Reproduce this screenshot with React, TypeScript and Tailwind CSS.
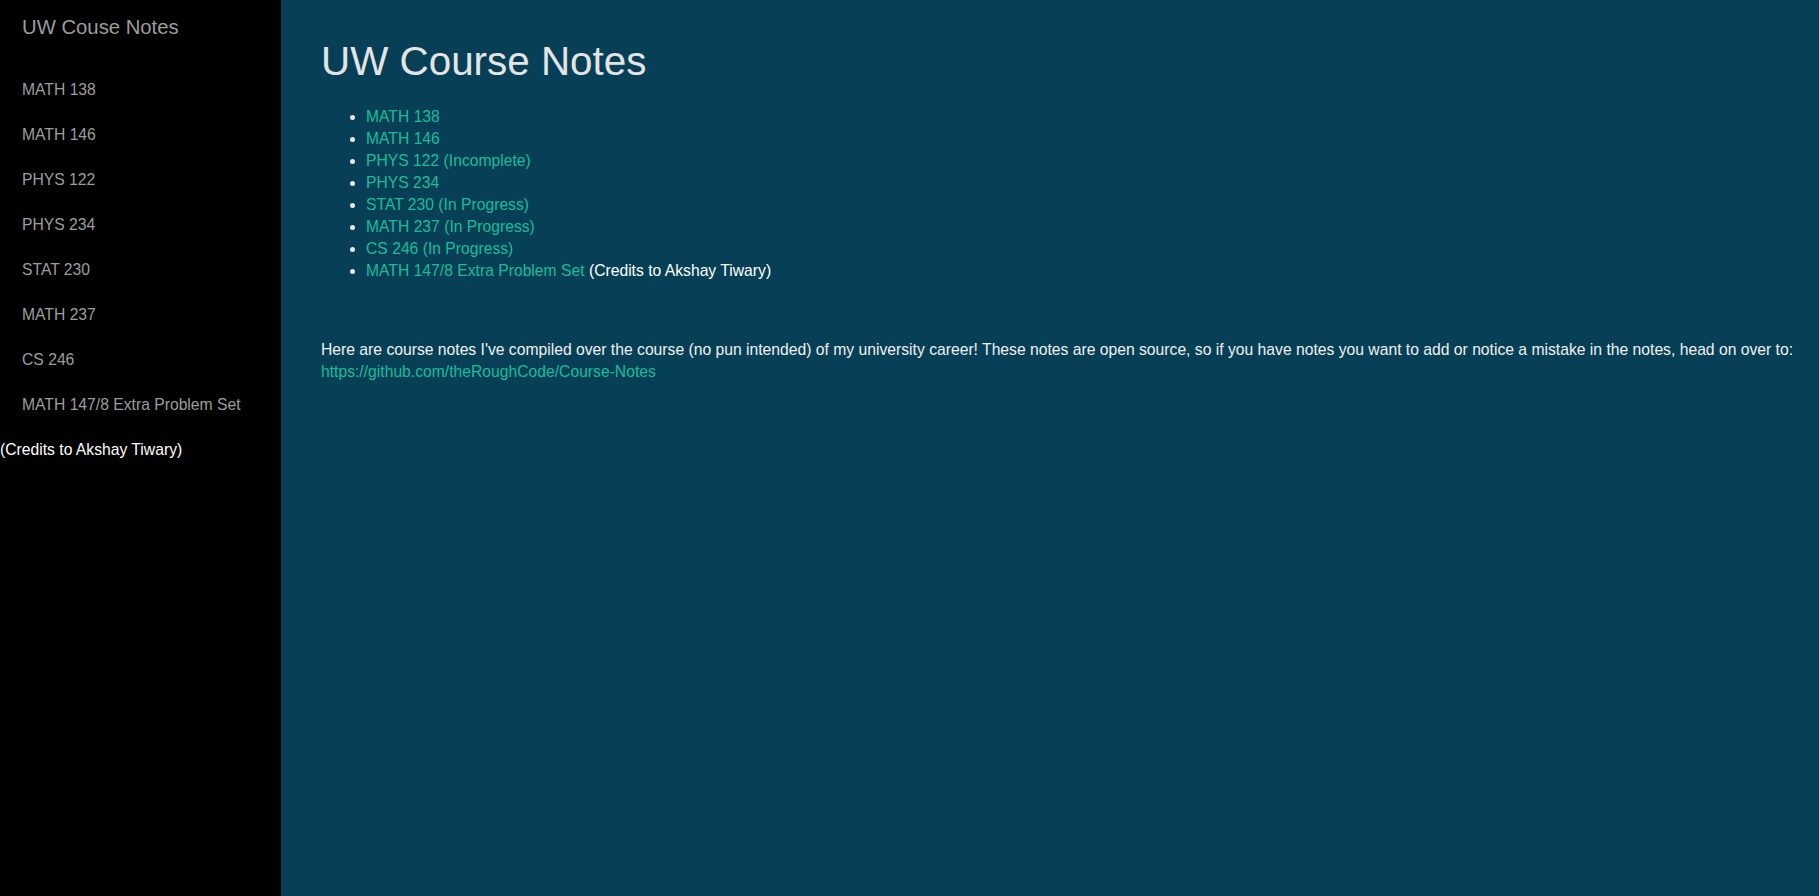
import React from "react";

const courses = ["MATH 138", "MATH 146", "PHYS 122", "PHYS 234", "STAT 230", "MATH 237", "CS 246", "MATH 147/8 Extra Problem Set"];

const mainItems: { label: string; extra?: string }[] = [
  { label: "MATH 138" },
  { label: "MATH 146" },
  { label: "PHYS 122 (Incomplete)" },
  { label: "PHYS 234" },
  { label: "STAT 230 (In Progress)" },
  { label: "MATH 237 (In Progress)" },
  { label: "CS 246 (In Progress)" },
  { label: "MATH 147/8 Extra Problem Set", extra: " (Credits to Akshay Tiwary)" },
];

export default function App() {
  return (
    <div
      className="flex min-h-screen w-full text-[15.7px] leading-[22px]"
      style={{ fontFamily: '"Liberation Sans", Arial, Helvetica, sans-serif' }}
    >
      <aside className="w-[281px] shrink-0 bg-black">
        <div className="pl-[22px] pt-[13px] text-[20.3px] leading-[28px] text-[#9d9d9d]">UW Couse Notes</div>
        <nav className="mt-[26px] flex flex-col">
          {courses.map((c) => (
            <a key={c} href="#" className="block py-[11.5px] pl-[22px] text-[#9d9d9d]">
              {c}
            </a>
          ))}
          <div className="py-[11.5px] text-white">(Credits to Akshay Tiwary)</div>
        </nav>
      </aside>
      <main className="flex-1 bg-[#074056] pl-[40px] pr-[16px]">
        <h1 className="mt-[39px] text-[40.4px] leading-[44px] font-normal text-[#e4e4e4]">UW Course Notes</h1>
        <ul className="mt-[22.5px] list-disc pl-[45px] text-[#e8e8e8]">
          {mainItems.map((it) => (
            <li key={it.label}>
              <a href="#" className="text-[#18bc9c]">
                {it.label}
              </a>
              {it.extra && <span className="text-white">{it.extra}</span>}
            </li>
          ))}
        </ul>
        <p className="mt-[57px] text-[#f0f0f0]">
          Here are course notes I've compiled over the course (no pun intended) of my university career! These notes are open source, so if you have notes you want to add or notice a mistake in the notes, head on over to:
          <br />
          <a href="#" className="text-[#18bc9c]">
            https://github.com/theRoughCode/Course-Notes
          </a>
        </p>
      </main>
    </div>
  );
}
